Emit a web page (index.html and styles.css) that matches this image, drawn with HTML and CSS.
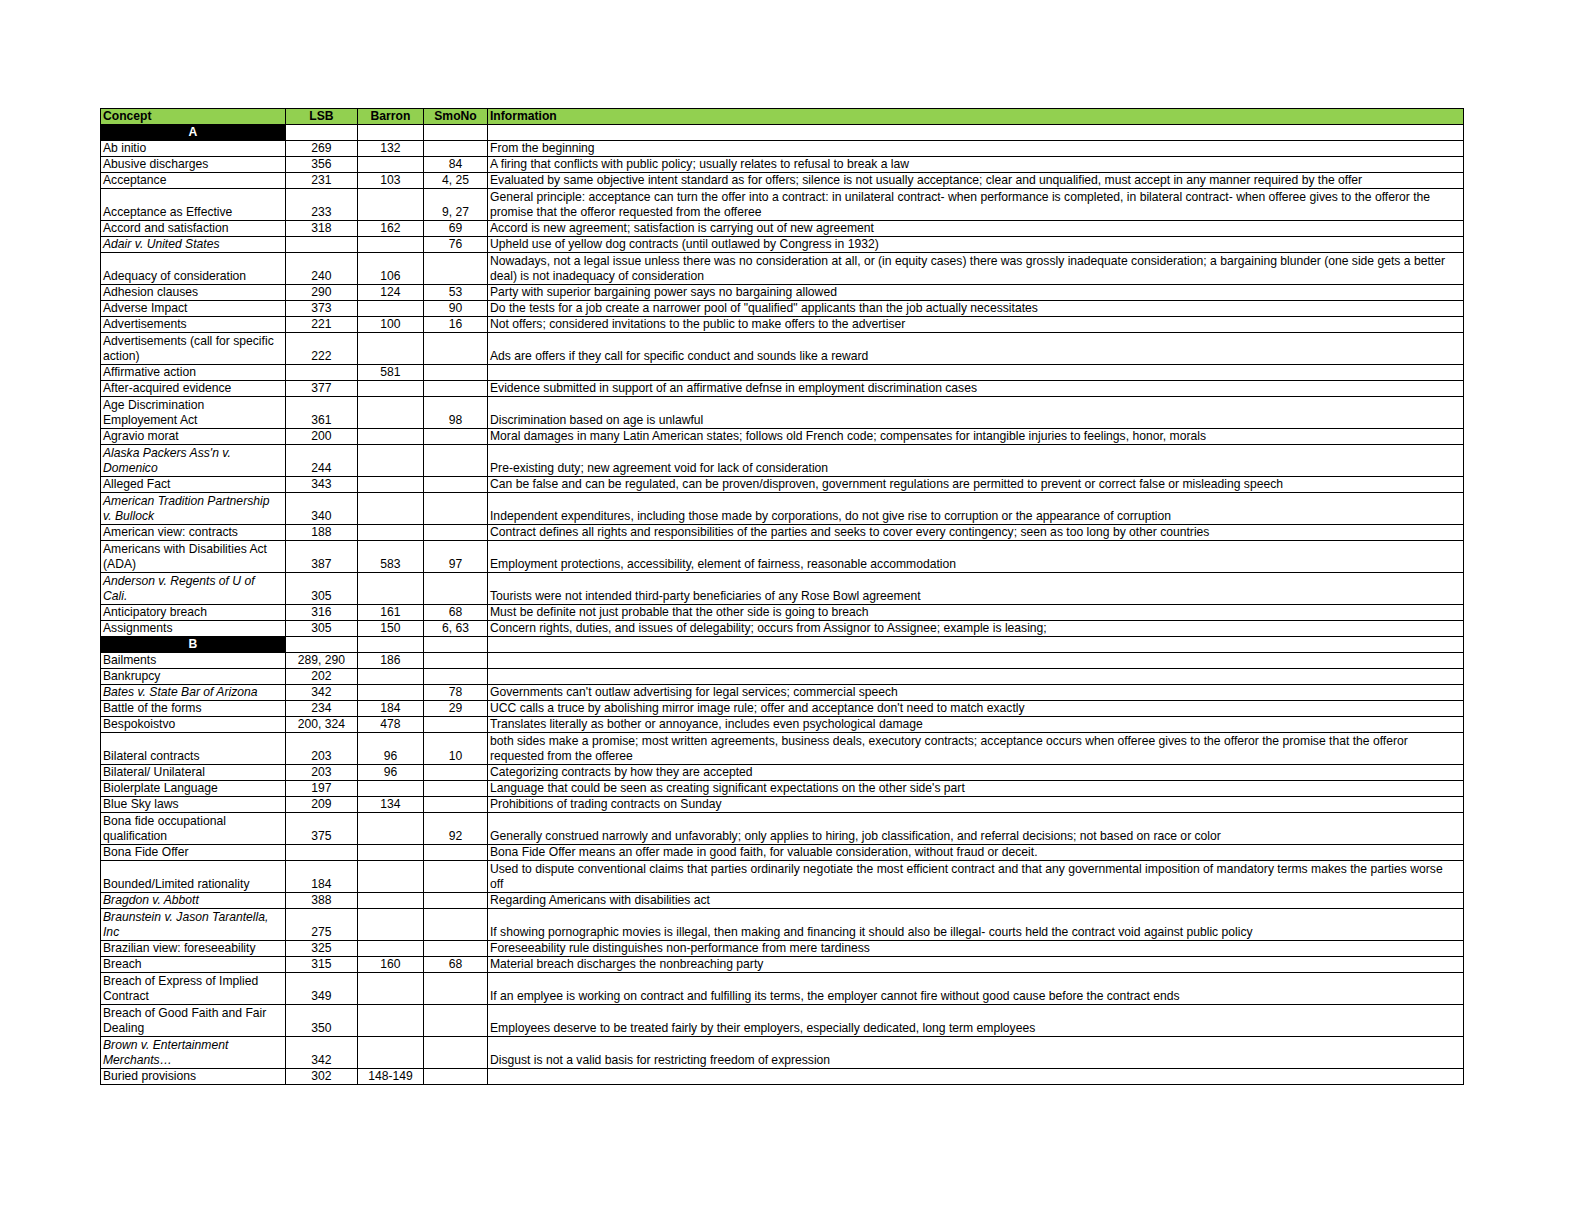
FILE: index.html
```html
<!DOCTYPE html>
<html>
<head>
<meta charset="utf-8">
<link rel="stylesheet" href="styles.css">
</head>
<body>
<div class="page">
<table class="sheet">
<colgroup><col class="c-concept"><col class="c-lsb"><col class="c-barron"><col class="c-smono"><col class="c-info"></colgroup>
<thead>
<tr class="head"><th class="l">Concept</th><th>LSB</th><th>Barron</th><th>SmoNo</th><th class="l">Information</th></tr>
</thead>
<tbody>
<tr class="sec"><td class="letter">A</td><td></td><td></td><td></td><td></td></tr>
<tr><td>Ab initio</td><td class="n">269</td><td class="n">132</td><td class="n"></td><td>From the beginning</td></tr>
<tr><td>Abusive discharges</td><td class="n">356</td><td class="n"></td><td class="n">84</td><td>A firing that conflicts with public policy; usually relates to refusal to break a law</td></tr>
<tr><td>Acceptance</td><td class="n">231</td><td class="n">103</td><td class="n">4, 25</td><td>Evaluated by same objective intent standard as for offers; silence is not usually acceptance; clear and unqualified, must accept in any manner required by the offer</td></tr>
<tr class="w2"><td>Acceptance as Effective</td><td class="n">233</td><td class="n"></td><td class="n">9, 27</td><td>General principle: acceptance can turn the offer into a contract: in unilateral contract- when performance is completed, in bilateral contract- when offeree gives to the offeror the<br>promise that the offeror requested from the offeree</td></tr>
<tr><td>Accord and satisfaction</td><td class="n">318</td><td class="n">162</td><td class="n">69</td><td>Accord is new agreement; satisfaction is carrying out of new agreement</td></tr>
<tr><td class="i">Adair v. United States</td><td class="n"></td><td class="n"></td><td class="n">76</td><td>Upheld use of yellow dog contracts (until outlawed by Congress in 1932)</td></tr>
<tr class="w2"><td>Adequacy of consideration</td><td class="n">240</td><td class="n">106</td><td class="n"></td><td>Nowadays, not a legal issue unless there was no consideration at all, or (in equity cases) there was grossly inadequate consideration; a bargaining blunder (one side gets a better<br>deal) is not inadequacy of consideration</td></tr>
<tr><td>Adhesion clauses</td><td class="n">290</td><td class="n">124</td><td class="n">53</td><td>Party with superior bargaining power says no bargaining allowed</td></tr>
<tr><td>Adverse Impact</td><td class="n">373</td><td class="n"></td><td class="n">90</td><td>Do the tests for a job create a narrower pool of "qualified" applicants than the job actually necessitates</td></tr>
<tr><td>Advertisements</td><td class="n">221</td><td class="n">100</td><td class="n">16</td><td>Not offers; considered invitations to the public to make offers to the advertiser</td></tr>
<tr class="w2"><td>Advertisements (call for specific<br>action)</td><td class="n">222</td><td class="n"></td><td class="n"></td><td>Ads are offers if they call for specific conduct and sounds like a reward</td></tr>
<tr><td>Affirmative action</td><td class="n"></td><td class="n">581</td><td class="n"></td><td></td></tr>
<tr><td>After-acquired evidence</td><td class="n">377</td><td class="n"></td><td class="n"></td><td>Evidence submitted in support of an affirmative defnse in employment discrimination cases</td></tr>
<tr class="w2"><td>Age Discrimination<br>Employement Act</td><td class="n">361</td><td class="n"></td><td class="n">98</td><td>Discrimination based on age is unlawful</td></tr>
<tr><td>Agravio morat</td><td class="n">200</td><td class="n"></td><td class="n"></td><td>Moral damages in many Latin American states; follows old French code; compensates for intangible injuries to feelings, honor, morals</td></tr>
<tr class="w2"><td class="i">Alaska Packers Ass'n v.<br>Domenico</td><td class="n">244</td><td class="n"></td><td class="n"></td><td>Pre-existing duty; new agreement void for lack of consideration</td></tr>
<tr><td>Alleged Fact</td><td class="n">343</td><td class="n"></td><td class="n"></td><td>Can be false and can be regulated, can be proven/disproven, government regulations are permitted to prevent or correct false or misleading speech</td></tr>
<tr class="w2"><td class="i">American Tradition Partnership<br>v. Bullock</td><td class="n">340</td><td class="n"></td><td class="n"></td><td>Independent expenditures, including those made by corporations, do not give rise to corruption or the appearance of corruption</td></tr>
<tr><td>American view: contracts</td><td class="n">188</td><td class="n"></td><td class="n"></td><td>Contract defines all rights and responsibilities of the parties and seeks to cover every contingency; seen as too long by other countries</td></tr>
<tr class="w2"><td>Americans with Disabilities Act<br>(ADA)</td><td class="n">387</td><td class="n">583</td><td class="n">97</td><td>Employment protections, accessibility, element of fairness, reasonable accommodation</td></tr>
<tr class="w2"><td class="i">Anderson v. Regents of U of<br>Cali.</td><td class="n">305</td><td class="n"></td><td class="n"></td><td>Tourists were not intended third-party beneficiaries of any Rose Bowl agreement</td></tr>
<tr><td>Anticipatory breach</td><td class="n">316</td><td class="n">161</td><td class="n">68</td><td>Must be definite not just probable that the other side is going to breach</td></tr>
<tr><td>Assignments</td><td class="n">305</td><td class="n">150</td><td class="n">6, 63</td><td>Concern rights, duties, and issues of delegability; occurs from Assignor to Assignee; example is leasing;</td></tr>
<tr class="sec"><td class="letter">B</td><td></td><td></td><td></td><td></td></tr>
<tr><td>Bailments</td><td class="n">289, 290</td><td class="n">186</td><td class="n"></td><td></td></tr>
<tr><td>Bankrupcy</td><td class="n">202</td><td class="n"></td><td class="n"></td><td></td></tr>
<tr><td class="i">Bates v. State Bar of Arizona</td><td class="n">342</td><td class="n"></td><td class="n">78</td><td>Governments can't outlaw advertising for legal services; commercial speech</td></tr>
<tr><td>Battle of the forms</td><td class="n">234</td><td class="n">184</td><td class="n">29</td><td>UCC calls a truce by abolishing mirror image rule; offer and acceptance don't need to match exactly</td></tr>
<tr><td>Bespokoistvo</td><td class="n">200, 324</td><td class="n">478</td><td class="n"></td><td>Translates literally as bother or annoyance, includes even psychological damage</td></tr>
<tr class="w2"><td>Bilateral contracts</td><td class="n">203</td><td class="n">96</td><td class="n">10</td><td>both sides make a promise; most written agreements, business deals, executory contracts; acceptance occurs when offeree gives to the offeror the promise that the offeror<br>requested from the offeree</td></tr>
<tr><td>Bilateral/ Unilateral</td><td class="n">203</td><td class="n">96</td><td class="n"></td><td>Categorizing contracts by how they are accepted</td></tr>
<tr><td>Biolerplate Language</td><td class="n">197</td><td class="n"></td><td class="n"></td><td>Language that could be seen as creating significant expectations on the other side's part</td></tr>
<tr><td>Blue Sky laws</td><td class="n">209</td><td class="n">134</td><td class="n"></td><td>Prohibitions of trading contracts on Sunday</td></tr>
<tr class="w2"><td>Bona fide occupational<br>qualification</td><td class="n">375</td><td class="n"></td><td class="n">92</td><td>Generally construed narrowly and unfavorably; only applies to hiring, job classification, and referral decisions; not based on race or color</td></tr>
<tr><td>Bona Fide Offer</td><td class="n"></td><td class="n"></td><td class="n"></td><td>Bona Fide Offer means an offer made in good faith, for valuable consideration, without fraud or deceit.</td></tr>
<tr class="w2"><td>Bounded/Limited rationality</td><td class="n">184</td><td class="n"></td><td class="n"></td><td>Used to dispute conventional claims that parties ordinarily negotiate the most efficient contract and that any governmental imposition of mandatory terms makes the parties worse<br>off</td></tr>
<tr><td class="i">Bragdon v. Abbott</td><td class="n">388</td><td class="n"></td><td class="n"></td><td>Regarding Americans with disabilities act</td></tr>
<tr class="w2"><td class="i">Braunstein v. Jason Tarantella,<br>Inc</td><td class="n">275</td><td class="n"></td><td class="n"></td><td>If showing pornographic movies is illegal, then making and financing it should also be illegal- courts held the contract void against public policy</td></tr>
<tr><td>Brazilian view: foreseeability</td><td class="n">325</td><td class="n"></td><td class="n"></td><td>Foreseeability rule distinguishes non-performance from mere tardiness</td></tr>
<tr><td>Breach</td><td class="n">315</td><td class="n">160</td><td class="n">68</td><td>Material breach discharges the nonbreaching party</td></tr>
<tr class="w2"><td>Breach of Express of Implied<br>Contract</td><td class="n">349</td><td class="n"></td><td class="n"></td><td>If an emplyee is working on contract and fulfilling its terms, the employer cannot fire without good cause before the contract ends</td></tr>
<tr class="w2"><td>Breach of Good Faith and Fair<br>Dealing</td><td class="n">350</td><td class="n"></td><td class="n"></td><td>Employees deserve to be treated fairly by their employers, especially dedicated, long term employees</td></tr>
<tr class="w2"><td class="i">Brown v. Entertainment<br>Merchants…</td><td class="n">342</td><td class="n"></td><td class="n"></td><td>Disgust is not a valid basis for restricting freedom of expression</td></tr>
<tr><td>Buried provisions</td><td class="n">302</td><td class="n">148-149</td><td class="n"></td><td></td></tr>
</tbody>
</table>
</div>
</body>
</html>
```
FILE: styles.css
```css
html, body {
  margin: 0;
  padding: 0;
  background: #ffffff;
}
.page {
  padding: 108px 0 0 100px;
}
.sheet {
  border-collapse: collapse;
  table-layout: fixed;
  width: 1363px;
  font-family: "Liberation Sans", Arial, sans-serif;
  font-size: 12.15px;
  line-height: 15px;
  color: #000;
}
.c-concept { width: 185px; }
.c-lsb { width: 72px; }
.c-barron { width: 66px; }
.c-smono { width: 64px; }
.c-info { width: 976px; }
.sheet th, .sheet td {
  border: 1px solid #000;
  padding: 0 2px;
  vertical-align: bottom;
  white-space: nowrap;
  overflow: hidden;
}
.sheet tr { height: 16px; }
.sheet tr.w2 { height: 32px; }
.head th {
  background: #92d050;
  font-weight: bold;
  text-align: center;
}
.head th.l { text-align: left; }
.sheet td.n { text-align: center; }
.sheet td.i { font-style: italic; }
.sec td.letter {
  background: #000;
  color: #fff;
  font-weight: bold;
  text-align: center;
}
```
